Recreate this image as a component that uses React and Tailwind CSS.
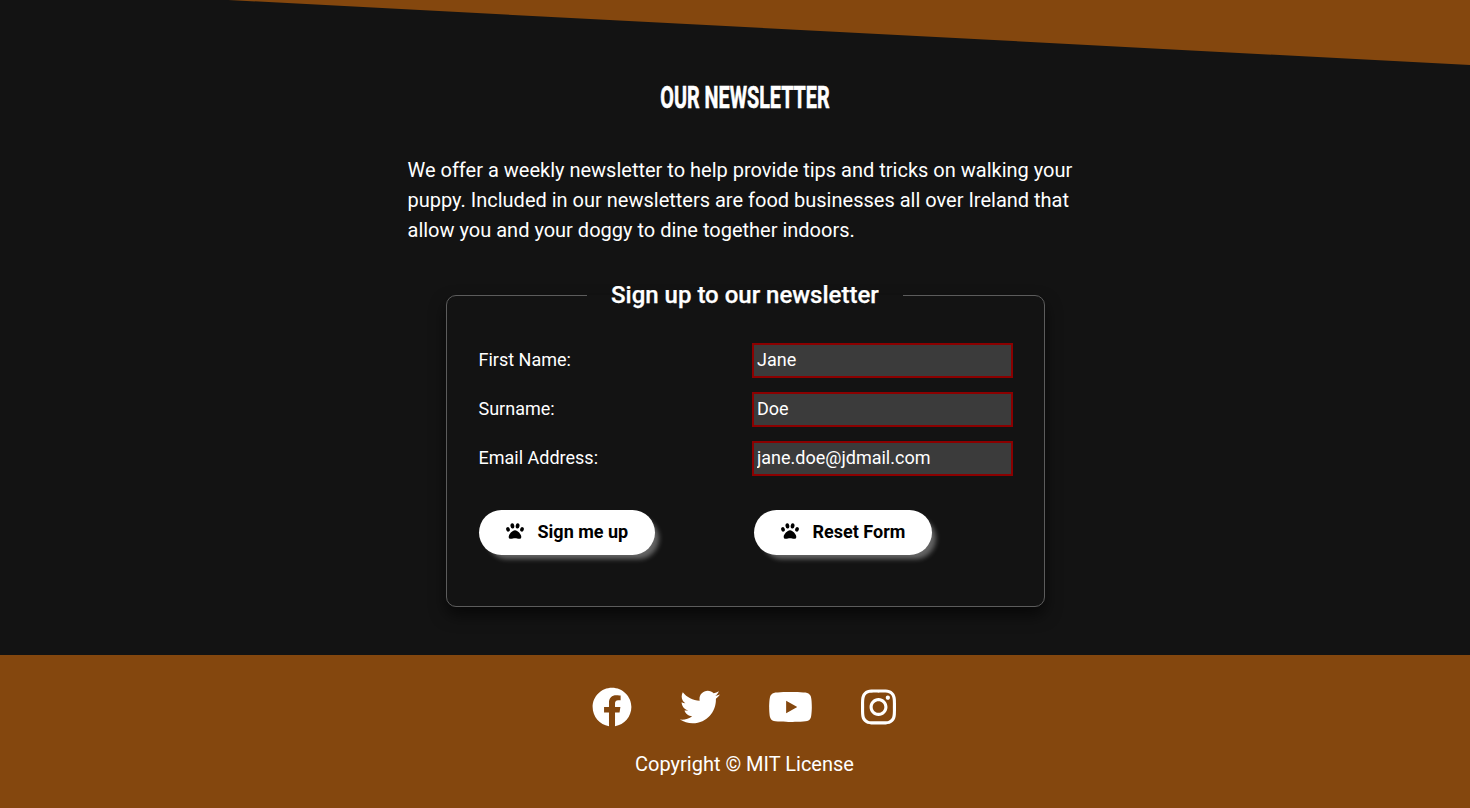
import React from "react";
import { FaFacebook, FaTwitter, FaYoutube, FaInstagram } from "react-icons/fa";

function Paw() {
  return (
    <svg viewBox="0 0 18 16" className="mb-px ml-[0.5px] h-[16px] w-[18px]" fill="currentColor" aria-hidden="true">
      <ellipse cx="2" cy="6.4" rx="1.8" ry="2.3" transform="rotate(-18 2 6.4)" />
      <ellipse cx="6.4" cy="2.9" rx="1.9" ry="2.7" transform="rotate(-10 6.4 2.9)" />
      <ellipse cx="11.6" cy="2.9" rx="1.9" ry="2.7" transform="rotate(10 11.6 2.9)" />
      <ellipse cx="16" cy="6.4" rx="1.8" ry="2.3" transform="rotate(18 16 6.4)" />
      <path d="M9 7.3c2.6 0 6.3 4.1 6.3 6.6 0 1.2-.8 1.9-2.1 1.9-1.6 0-2.6-.5-4.2-.5s-2.6.5-4.2.5c-1.3 0-2.1-.7-2.1-1.9 0-2.5 3.7-6.600 6.300-6.600z" />
    </svg>
  );
}

function Field({ label, type = "text", value }) {
  return (
    <label className="flex h-[35px] items-center justify-between text-[18px] leading-[27px]">
      <span className="-mt-[2px] -ml-[0.5px]">{label}</span>
      <input
        type={type}
        defaultValue={value}
        className="h-[35px] w-[261px] border-2 border-inset border-[#8b0000] bg-[#3b3b3b] px-[3px] pb-[2px] text-[18px] text-white outline-none"
      />
    </label>
  );
}

function PawButton({ children, type, className }) {
  return (
    <button
      type={type}
      className={`flex h-[45px] items-center gap-[14px] rounded-full bg-white pb-[2px] pl-[26px] text-[18px] font-bold text-black shadow-[6px_6px_5px_-2px_rgba(255,255,255,0.35)] ${className}`}
    >
      <Paw />
      {children}
    </button>
  );
}

export default function App() {
  return (
    <div className="flex h-[808px] w-full flex-col overflow-hidden bg-[#131313] font-['Roboto',sans-serif] text-white">
      <div className="h-[65px] shrink-0 bg-[#84470e] [clip-path:polygon(228px_0,100%_0,100%_100%)]" />
      <main className="flex h-[590px] shrink-0 flex-col items-center pl-[19px]">
        <h2 className="mt-[14px] flex h-[36px] w-[170px] items-center justify-center whitespace-nowrap text-[32px] leading-[36px] font-bold">
          <span className="scale-x-[0.618] [-webkit-text-stroke:0.6px_white]">OUR NEWSLETTER</span>
        </h2>
        <p className="mt-[40px] w-[674px] text-[20px] leading-[30px]">
          We offer a weekly newsletter to help provide tips and tricks on walking your puppy. Included
          in our newsletters are food businesses all over Ireland that allow you and your doggy to dine
          together indoors.
        </p>
        <fieldset className="mt-[32px] ml-[2px] h-[330px] w-[599px] shrink-0 rounded-[10px] border border-[#5c5c5c] pr-[31px] pl-[32px] shadow-[0_8px_16px_rgba(0,0,0,0.6)]">
          <legend className="ml-[108px] px-[24px] text-[24px] leading-[36px] font-medium">
            <span className="[-webkit-text-stroke:0.25px_white]">Sign up to our newsletter</span>
          </legend>
          <div className="mt-[30px] flex flex-col gap-[14px]">
            <Field label="First Name:" value="Jane" />
            <Field label="Surname:" value="Doe" />
            <Field label="Email Address:" type="email" value="jane.doe@jdmail.com" />
          </div>
          <div className="mt-[34px] flex gap-[99px]">
            <PawButton type="button" className="w-[176px]">Sign me up</PawButton>
            <PawButton type="reset" className="w-[178px]">Reset Form</PawButton>
          </div>
        </fieldset>
      </main>
      <footer className="flex h-[153px] shrink-0 flex-col items-center bg-[#84470e] pt-[32px] pl-[19px]">
        <div className="mr-[0.5px] flex gap-[48px]">
          <FaFacebook className="h-[40px] w-[40px]" />
          <FaTwitter className="h-[40px] w-[40px]" />
          <FaYoutube className="h-[40px] w-[45px]" />
          <FaInstagram className="h-[40px] w-[35px]" />
        </div>
        <p className="mt-[22px] text-[20px] leading-[30px]">Copyright © MIT License</p>
      </footer>
    </div>
  );
}
